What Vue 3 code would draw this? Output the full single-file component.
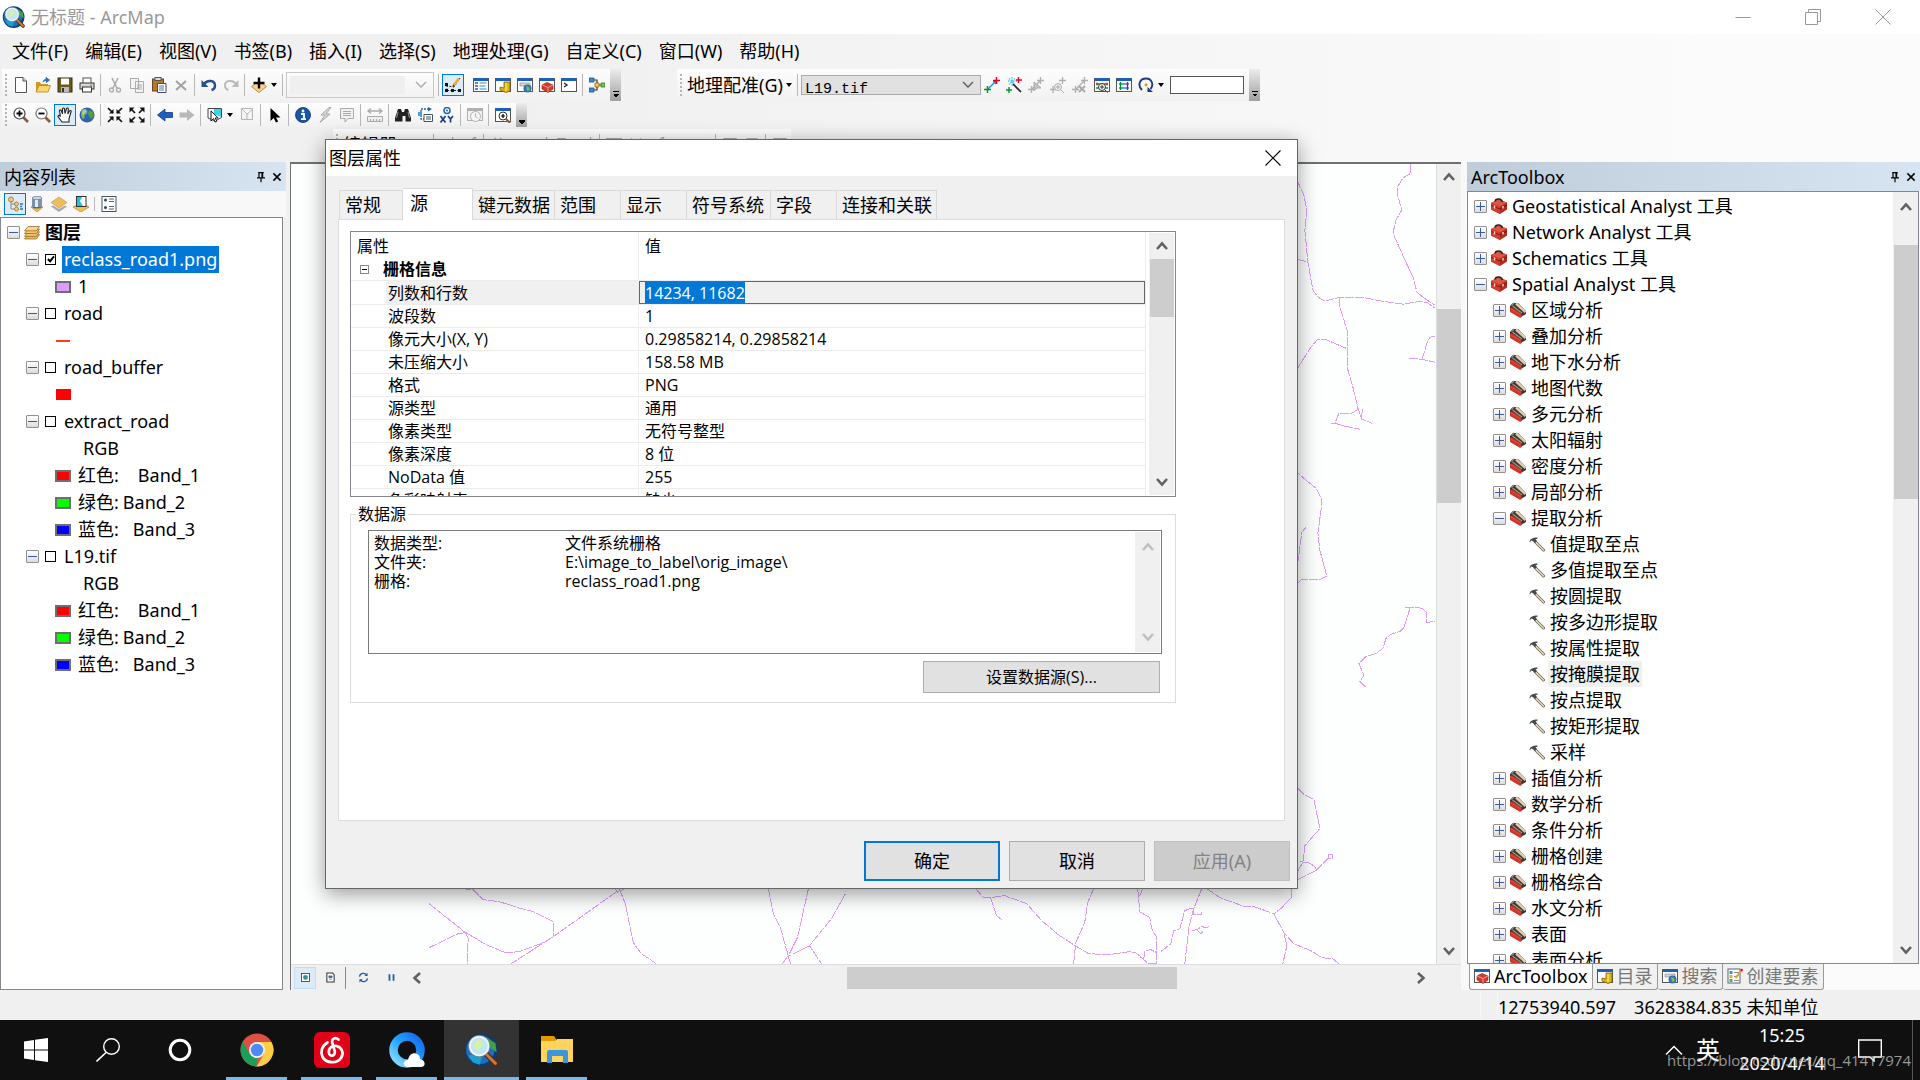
<script setup>
import { onMounted, ref } from 'vue'

const box = (inner) =>
  `<rect x=".5" y="1.5" width="15" height="13" fill="#fff" stroke="#555"/><rect x="1" y="1" width="14" height="3" fill="#1f5fb8"/>${inner}`

const hammer =
  '<path d="M6 5.5L14.500 14" stroke="#6b6250" stroke-width="3" stroke-linecap="round"/><path d="M6 5.500L14.500 14" stroke="#e4dac0" stroke-width="1.600" stroke-linecap="round"/><path d="M.5 5.500C1.500 2.500 4 1.500 8.500 1.500V2.500L6.500 3.500L8 5L6 7L4 5L2 4.500L1 6.500Z" fill="#3f4a50"/>'

const toolbox =
  '<path d="M0 5L7 1.500L16 4.500V11.500L9 16L0 11.500Z" fill="#b5281c"/><path d="M0 5L7 1.500L16 4.500L9 8.500Z" fill="#dd5745"/><path d="M0 5L9 8.500V16L0 11.500Z" fill="#d23c2c"/><path d="M4 3.500C4.500 0 10.500 0 11.500 4" fill="none" stroke="#2a2020" stroke-width="1.500"/><path d="M0 7.500L9 11L16 7" fill="none" stroke="#6e120c" stroke-width=".8"/><path d="M3.500 7.500v3M12 8v2.500" stroke="#f7d9d2" stroke-width="1.400"/>'

const toolset =
  '<path d="M0 4L3 1L8 1L16 9V12L10 15.500L0 9Z" fill="#3c3733"/><path d="M6 1.500L15.500 10" stroke="#ddd0b0" stroke-width="2.400"/><path d="M2.500 4L12 11" stroke="#a09a90" stroke-width="1.100"/><path d="M0 6L2 5.500L11.500 11.500V15.500H9.500L0 10Z" fill="#cf3425"/><path d="M.5 6.700L10.500 12.800" stroke="#e0584a" stroke-width=".8"/><path d="M1.500 3.500L4 1" stroke="#8a8580" stroke-width="1.400"/>'

const globe =
  '<circle cx="8" cy="8" r="7.500" fill="#2f62b0"/><path d="M4 3C7 2 8 3 7.500 5L5 7.500L6 10.500L4 12C2 10 1.500 6 4 3Z" fill="#7fc04a"/><path d="M10 3L14 5L14.500 9L12 12L10 9L9 6Z" fill="#56a038"/><circle cx="5.500" cy="5" r="3" fill="#fff" opacity=".3"/>'

const arcmap =
  '<circle cx="15.500" cy="16" r="14.500" fill="#0c3c78"/><circle cx="14.500" cy="16" r="12.500" fill="#1d6fbf"/><path d="M19 4L28 10L29 18L23 14L18 12Z" fill="#43a047"/><path d="M8 20L16 22L14 29L8 27L4 21Z" fill="#1c9fd0"/><path d="M19 19l9 9" stroke="#5b2c0c" stroke-width="5" stroke-linecap="round"/><path d="M20 20l8 8" stroke="#cf7a35" stroke-width="2.500" stroke-linecap="round"/><circle cx="13.500" cy="12.500" r="8.500" fill="#bfe6f5" stroke="#f4f4f4" stroke-width="2"/><path d="M10 8L15 7L17 12L12 16L9 13Z" fill="#d8f0a0"/><circle cx="13.500" cy="12.500" r="9.600" fill="none" stroke="#64798c" stroke-width=".7"/>'

const ic = {
  hammer, toolbox, toolset, globe, arcmap,
  file: '<path d="M2.500.5h7.500l3.500 3.500v11.500h-11z" fill="#fff" stroke="#555"/><path d="M10 .5v3.500h3.500" fill="#cfe0f2" stroke="#555"/>',
  open: '<path d="M1 15V5h4l1 2h7v8z" fill="#c99a2c"/><path d="M1 15L4 8.500h11.500L13 15z" fill="#fbd66a" stroke="#b5851d" stroke-width=".8"/><path d="M8 5C9 2 11 2 12.500 3M11 .5L14.500 3L11.500 5.500Z" fill="#2a6db8" stroke="#2a6db8"/>',
  save: '<rect x="1" y="1" width="14" height="14" fill="#6b5b1e" stroke="#332d10"/><rect x="4" y="1.500" width="8" height="6" fill="#fff"/><rect x="4" y="10" width="8" height="5" fill="#bbb"/><rect x="5" y="11" width="2" height="4" fill="#333"/>',
  print: '<rect x="4" y="1" width="8" height="6" fill="#fff" stroke="#555"/><rect x="1" y="6" width="14" height="6" fill="#d8d8d8" stroke="#333"/><rect x="3.500" y="10" width="9" height="5" fill="#fff" stroke="#333"/><rect x="11" y="7.500" width="2" height="1.500" fill="#7b2"/>',
  cut: '<path d="M5 1L10 11M11 1L6 11" stroke="#aaa" stroke-width="1.600"/><circle cx="4.500" cy="13" r="2" fill="none" stroke="#aaa" stroke-width="1.300"/><circle cx="11.500" cy="13" r="2" fill="none" stroke="#aaa" stroke-width="1.300"/>',
  copy: '<path d="M1.500 1.500h8v10h-8zM6.500 4.500h8v11h-8z" fill="#f4f4f4" stroke="#aaa"/><path d="M8 8h5M8 10h5M8 12h5" stroke="#aaa"/>',
  paste: '<rect x="1.500" y="2" width="11" height="12" fill="#b77a2c" stroke="#6e4715"/><rect x="4" y=".5" width="6" height="3" fill="#ddd" stroke="#555"/><path d="M6.500 6.500h8.500v9h-8.500z" fill="#fff" stroke="#446"/><path d="M8 9h5M8 11h5M8 13h5" stroke="#57a"/>',
  del: '<path d="M3 4L13 13M13 4L3 13" stroke="#a4a4a4" stroke-width="2.200"/>',
  undo: '<path d="M3 7C6 2.500 14 3 14 8.500C14 11 12.500 12.500 10.500 13" fill="none" stroke="#24508e" stroke-width="2.400"/><path d="M.5 3v7h7z" fill="#24508e"/>',
  redo: '<path d="M13 7C10 2.500 2 3 2 8.500C2 11 3.500 12.500 5.500 13" fill="none" stroke="#bbb" stroke-width="2"/><path d="M15.500 3v7h-7z" fill="#bbb"/>',
  add: '<path d="M8 4L15.500 9.500L8 15.500L.5 9.500Z" fill="#fbd28a" stroke="#b98b3c"/><path d="M8 .5v11M2.500 6h11" stroke="#000" stroke-width="2.400"/>',
  edit: '<path d="M2 13.500h12M2 13.500V9L9 10L15 1" fill="none" stroke="#222" stroke-dasharray="2 1.500"/><path d="M0 12h3v3H0zM6 12h3v3H6zM13 12h3v3h-3zM0 6h3v3H0z" fill="#111"/><path d="M8.500 8.500L14 1.500" stroke="#f0a83c" stroke-width="2.600"/><path d="M7.500 10l.5-2.500l2 1.500z" fill="#333"/>',
  list: box('<path d="M2 6h3M2 9h3M2 12h3" stroke="#1f5fb8" stroke-width="1.500"/><path d="M6.500 6h7M6.500 9h6M6.500 12h7" stroke="#2b8fc0" stroke-width="1.200"/>'),
  catalog: box('<path d="M9 5h6v9l-4 1.500L5 13v-3l4 1z" fill="#e3b512" stroke="#75600c" stroke-width=".8"/><path d="M11 6v8" stroke="#fff1a0"/>'),
  find: box('<rect x="3" y="6" width="10" height="3" fill="#d5d5d5" stroke="#888" stroke-width=".6"/><circle cx="10.500" cy="11.500" r="4" fill="#2f6fb8"/><path d="M9 9l3 1l1 3l-3 1z" fill="#7fc04a"/>'),
  tbx: box('<path d="M3 8l5-2.500L14 8v4l-5 3.500L3 12z" fill="#d33a2b" stroke="#8e1a12" stroke-width=".6"/><path d="M3 8l6 2.500L14 8M9 10.500V15" stroke="#f6b3a8" fill="none" stroke-width=".8"/>'),
  py: box('<path d="M3 6l3 2l-3 2" fill="none" stroke="#222" stroke-width="1.300"/>'),
  model: '<path d="M4 3h4v10H4M8 8h5" fill="none" stroke="#333" stroke-width="1.200"/><path d="M0 1h5v4H0zM0 11h5v4H0z" fill="#3b8ad8" stroke="#1c4f8c" stroke-width=".8"/><path d="M6 6h4v4H6z" fill="#f4c94a" stroke="#8b6a10" stroke-width=".8"/><path d="M12 6h4v4h-4z" fill="#7cc84e" stroke="#2e7a17" stroke-width=".8"/>',
  zin: '<path d="M10 10l5 5" stroke="#8a5a3a" stroke-width="2.600"/><circle cx="6.500" cy="6.500" r="5.500" fill="#fff" stroke="#444" stroke-width="1.200"/><path d="M6.500 3.500v6M3.500 6.500h6" stroke="#000" stroke-width="1.800"/>',
  zout: '<path d="M10 10l5 5" stroke="#8a5a3a" stroke-width="2.600"/><circle cx="6.500" cy="6.500" r="5.500" fill="#fff" stroke="#777" stroke-width="1.200"/><path d="M3.500 6.500h6" stroke="#000" stroke-width="1.800"/>',
  hand: '<path d="M5 15L1 9.500C1 8 2.500 8 3.500 9.500L2.500 4C2.500 2.500 4 2.500 4.500 4L5.500 7L5.500 2C6 .5 7.500 .8 7.500 2L8 6.500L9.500 1.500C10 .5 11.500 1 11.300 2.500L10.800 7L12.500 4C13.300 3 14.500 3.500 14 5L12 11.500V15Z" fill="#fff" stroke="#222" stroke-width="1.100"/>',
  fixin: '<path d="M1 1l5 5M15 1l-5 5M1 15l5-5M15 15l-5-5" stroke="#111" stroke-width="1.700"/><path d="M6.500 2v4.500H2zM9.500 2v4.500H14zM6.500 14V9.500H2zM9.500 14V9.500H14z" fill="#111"/>',
  fixout: '<path d="M2 2l4 4M14 2l-4 4M2 14l4-4M14 14l-4-4" stroke="#111" stroke-width="1.700"/><path d="M.5 5.500V.5h5zM15.500 5.500V.5h-5zM.5 10.500v5h5zM15.500 10.500v5h-5z" fill="#111"/>',
  back: '<path d="M.5 8L8 2v3.500h7.500v5H8V14z" fill="#1f5fc4" stroke="#123a80" stroke-width=".8"/>',
  fwd: '<path d="M15.500 8L8 2v3.500H.5v5H8V14z" fill="#b8b8b8"/>',
  selfeat: '<path d="M1 1.500h13.500v9L8 14L1 11z" fill="#fff" stroke="#444"/><path d="M7 2h7v8L7 7z" fill="#3fd0ea"/><path d="M4 4v10l2.500-2.500L8 15l1.800-.8L8.200 11h3z" fill="#fff" stroke="#111"/>',
  unsel: '<path d="M2.500 1.500h11v11h-11zM3 2l5 5l5-4M8 7v5" fill="#f4f4f4" stroke="#b5b5b5"/>',
  arrow: '<path d="M3.500 1v13l3.200-3L9 15.500l2.200-1L9 10.500h4.500z" fill="#000"/>',
  info: '<circle cx="8" cy="8" r="7.500" fill="#1b55a8" stroke="#0d2f66" stroke-width=".8"/><circle cx="8" cy="4" r="1.400" fill="#fff"/><path d="M6 7h3v5M6 12.200h5" stroke="#fff" stroke-width="1.800" fill="none"/>',
  bolt: '<path d="M12 .5L4 8h4L3 15.500L13 7H9L14 .5z" fill="#d6d6d6" stroke="#aaa"/>',
  note: '<path d="M1.500 1.500h13v10H9l-3 3.500v-3.500H1.500z" fill="#f2f2f2" stroke="#aaa"/><path d="M4 4.500h8M4 6.500h8M4 8.500h8" stroke="#aaa"/>',
  measure: '<path d="M1 4h14M4 1.500L1 4l3 2.500M12 1.500L15 4l-3 2.500" fill="none" stroke="#aaa" stroke-width="1.300"/><path d="M.5 9.500h15v5H.5zM3.500 12v2M6.500 12v2M9.500 12v2M12.500 12v2" fill="#eee" stroke="#aaa"/>',
  bino: '<path d="M3 2h3l1 3h2l1-3h3l3 9v3.500h-5.500V9h-3v5.500H0V11z" fill="#222"/><path d="M3 5L1.500 11M13 5l1.500 6" stroke="#999"/>',
  route: '<path d="M4 5V2h9M4 8v4h4" fill="none" stroke="#2a62a8" stroke-width="1.300" stroke-dasharray="2 1"/><path d="M11 0l4 2l-4 2.500z" fill="#2a62a8"/><rect x="1" y="5" width="4" height="4" fill="#49a0dd"/><path d="M7 7.500h8.500v7H7zM9 10h5M9 12h5" fill="#fff" stroke="#456"/>',
  xy: '<circle cx="8" cy="3.500" r="3" fill="#fff" stroke="#1b66b0" stroke-width="1.500"/><circle cx="8" cy="3.500" r="1" fill="#1b66b0"/><path d="M1.500 9l5 6.500M6.500 9l-5 6.500M9 9l2.500 3v3.500M14 9l-2.500 3" fill="none" stroke="#173f80" stroke-width="1.700"/>',
  clock: '<rect x=".5" y="1.500" width="15" height="12" fill="#f2f2f2" stroke="#b0b0b0"/><path d="M1 3h14" stroke="#b0b0b0" stroke-width="2"/><circle cx="8.500" cy="9.500" r="5" fill="#f6f6f6" stroke="#b0b0b0"/><path d="M8.500 6.500v3l2 1.500" fill="none" stroke="#aaa"/>',
  viewer: box('<path d="M11 12l4 4" stroke="#8a5a3a" stroke-width="2"/><circle cx="8" cy="9" r="4" fill="#fff" stroke="#333"/><path d="M8 7v4M6 9h4" stroke="#000" stroke-width="1.200"/>'),
  cp: '<path d="M4 12L12 4" stroke="#2089e0" stroke-width="1.300"/><path d="M13 3L8.500 4.500L11.500 7.500z" fill="#2089e0"/><path d="M12.500 0v7M9 3.500h7" stroke="#e2001a" stroke-width="1.500"/><path d="M3.500 9v7M0 12.500h7" stroke="#00952a" stroke-width="1.500"/>',
  cpauto: '<path d="M2 4h9M3 1.500l6 6M9 1.500l-6 6M6 0v9" stroke="#4cc4ee" stroke-width="1.300" stroke-dasharray="1.500 1"/><path d="M7 7l8 8" stroke="#222" stroke-width="1.700"/><path d="M12.500 0v6M10 3h6" stroke="#e2001a" stroke-width="1.400"/><path d="M3 10v6M0 13h6" stroke="#00952a" stroke-width="1.400"/>',
  cpg: '<path d="M4 12L12 4M12.500 0v7M9 3.500h7M3.500 9v7M0 12.500h7" stroke="#b0b0b0" stroke-width="1.300"/><path d="M6 5v9l3-3h4z" fill="#c4c4c4" stroke="#aaa"/>',
  cpz: '<path d="M12.500 0v7M9 3.500h7M3 9v7M0 12.500h6" stroke="#b0b0b0" stroke-width="1.300"/><circle cx="8" cy="10" r="3.500" fill="#eee" stroke="#b0b0b0"/><path d="M8 8v4M6 10h4M11 13l3 3" stroke="#aaa"/>',
  cpx: '<path d="M4 12L12 4M12.500 0v7M9 3.500h7M3.500 9v7M0 12.500h7" stroke="#b0b0b0" stroke-width="1.300"/><path d="M7 9l6 6M13 9l-6 6" stroke="#aaa" stroke-width="2"/>',
  gview: box('<path d="M2 7h12M2 11h12" stroke="#00a03a" stroke-width="1.300"/><circle cx="8" cy="10" r="3.500" fill="#fff" stroke="#333"/><path d="M8 8v4M6 10h4M10.500 12.500l3 3" stroke="#333"/><path d="M3 5.500v3M13 5.500v3" stroke="#e2001a"/>'),
  gtab: box('<path d="M3 7h10M3 11h10" stroke="#2089e0" stroke-width="1.300"/><path d="M4.500 5v4M4.500 9v4" stroke="#00952a" stroke-width="1.300"/><path d="M11.500 5v4M11.500 9v4" stroke="#e2001a" stroke-width="1.300"/>'),
  rotate: '<path d="M4 13C-1 8 2 1.500 8 1.500S16 8 12.500 12" fill="none" stroke="#203a80" stroke-width="1.900"/><path d="M9.500 10v5h5.500z" fill="#203a80"/><circle cx="8" cy="8" r="1.400" fill="#c0a000"/>',
  tocOrder: '<path d="M4 5v8h5M4 8h5" fill="none" stroke="#888"/><circle cx="4" cy="3.500" r="2.500" fill="#f3c878" stroke="#ae8238"/><circle cx="9.500" cy="8" r="2" fill="#f3c878" stroke="#ae8238"/><circle cx="9.500" cy="13" r="2" fill="#f3c878" stroke="#ae8238"/><path d="M13 8h3M13 13h3M13 10.500h2" stroke="#1b78c8" stroke-width="1.500"/>',
  tocSource: '<path d="M2 11l6-2l6 2l-6 5z" fill="#f3c24d" stroke="#ae8238" stroke-width=".7"/><rect x="3" y="1.500" width="10" height="9.500" fill="#7d93ad"/><rect x="6" y="2" width="3" height="9" fill="#e4edf6"/><ellipse cx="8" cy="2" rx="5" ry="1.700" fill="#c7d3e0" stroke="#5d6f85" stroke-width=".6"/><path d="M3 11c2 2 8 2 10 0" fill="#56687e"/>',
  tocVis: '<path d="M0 10.500L8 16l8-5.500L8 6z" fill="#aaa"/><path d="M0 8L8 13l8-5L8 3z" fill="#fff"/><path d="M0 6.500L8 1l8 5.500L8 12z" fill="#f0bd5c" stroke="#c08b2c" stroke-width=".6"/>',
  tocSel: '<path d="M0 11L8 7l8 4l-8 5z" fill="#f3c24d" stroke="#ae8238" stroke-width=".7"/><rect x="3.500" y=".5" width="9.500" height="10" fill="#fff" stroke="#333"/><path d="M4 1h5l-2 4l3 5H4z" fill="#20c4e0"/>',
  tocOpt: '<rect x="1" y=".5" width="14" height="15" fill="#fff" stroke="#456"/><circle cx="4.500" cy="4" r="1.500" fill="#345"/><circle cx="4.500" cy="11.500" r="1.500" fill="#345"/><path d="M8 3h5M8 5.500h5M8 10.500h5M8 13h5" stroke="#567"/>',
  layers: '<path d="M4 9.500h11.500l-3 4.500H.5z" fill="#e9b85d" stroke="#8f6218" stroke-width=".7"/><path d="M4 6.800h11.500l-3 4.500H.5z" fill="#f0c674" stroke="#8f6218" stroke-width=".7"/><path d="M4 4h11.500l-3 4.500H.5z" fill="#f0c674" stroke="#8f6218" stroke-width=".7"/><path d="M4 1.500h11.500l-3 4.300H.5z" fill="#f6d592" stroke="#8f6218" stroke-width=".7"/>',
  create: '<rect x="1" y="1" width="12" height="14" fill="#fff" stroke="#567"/><rect x="2.500" y="3" width="3" height="3" fill="#3b8ad8"/><rect x="2.500" y="7" width="3" height="3" fill="#e3b512"/><rect x="2.500" y="11" width="3" height="3" fill="#4cae4c"/><path d="M7 4.500h5M7 8.500h3M7 12.500h5" stroke="#888"/><path d="M8.500 10L15 2" stroke="#e9a33c" stroke-width="2.200"/><path d="M14 3l1.500-2" stroke="#d06" stroke-width="2"/>',
  pin: '<path d="M4 2h7M5 2v6M9.500 2v6M2.500 8.500h10M7.500 9v5" stroke="#000" stroke-width="1.500" fill="none"/><path d="M9 2v6" stroke="#000" stroke-width="2"/>',
  x: '<path d="M3 3l9 9M12 3l-9 9" stroke="#000" stroke-width="1.900"/>',
  dataView: '<rect x="3" y="3" width="10" height="10" fill="#fff" stroke="#333"/><circle cx="8" cy="8" r="3" fill="#4aa24a"/><path d="M6 6h3v3H6z" fill="#2f7fd0"/>',
  layoutView: '<path d="M3.500 2.500h7l2 2v9h-9z" fill="#fff" stroke="#333" stroke-width="1.300"/><path d="M6 6h4v2H6zM6 10h4" fill="#3b8ad8" stroke="#333" stroke-width=".7"/>',
  refresh: '<path d="M3 7a5 5 0 0 1 9-2M13 9a5 5 0 0 1-9 2" fill="none" stroke="#1c5fa8" stroke-width="1.700"/><path d="M13 2v4H9zM3 14v-4h4z" fill="#1c5fa8"/>',
  pause: '<path d="M5.500 4v8M10.500 4v8" stroke="#1c5fa8" stroke-width="2.200"/>',
}

const bar1 = [
  'file', 'open', 'save', 'print', '|', 'cut', 'copy', 'paste', 'del', '|', 'undo', 'redo', '|', 'add', 'v', '|',
]
const bar1b = ['list', 'catalog', 'find', 'tbx', 'py', '|', 'model']
const bar2 = [
  'zin', 'zout', '*hand', 'globe', '|', 'fixin', 'fixout', '|', 'back', 'fwd', '|', 'selfeat', 'v', 'unsel', '|',
  'arrow', '|', 'info', 'bolt', 'note', '|', 'measure', '|', 'bino', 'route', 'xy', '|', 'clock', '|', 'viewer',
]
const barGeo = ['cp', 'cpauto', 'cpg', 'cpz', 'cpx', 'gview', 'gtab', 'rotate', 'v']
const barEdit = ['cpg', 'bolt', '|', 'cut', 'del', 'cpz', 'copy', 'cpx', '|', 'clock', 'measure', 'bolt', 'del', 'redo', '|', 'note', 'unsel', '|', 'note']

const menus = ['文件(F)', '编辑(E)', '视图(V)', '书签(B)', '插入(I)', '选择(S)', '地理处理(G)', '自定义(C)', '窗口(W)', '帮助(H)']

const bands = [
  { sw: '#ff0000', text: '红色:', band: 'Band_1', gap: 'g3' },
  { sw: '#00ff00', text: '绿色:', band: 'Band_2', gap: 'g1' },
  { sw: '#0000ff', text: '蓝色:', band: 'Band_3', gap: 'g2' },
]
const toc = [
  { layer: 'reclass_road1.png', checked: true, selected: true },
  { sw: '#dc9cff', text: '1' },
  { layer: 'road' },
  { line: true },
  { layer: 'road_buffer' },
  { fill: true },
  { layer: 'extract_road' },
  { rgb: 'RGB' },
  ...bands,
  { layer: 'L19.tif' },
  { rgb: 'RGB' },
  ...bands,
]

const tree = [
  [0, '+', 'Geostatistical Analyst 工具'], [0, '+', 'Network Analyst 工具'], [0, '+', 'Schematics 工具'], [0, '-', 'Spatial Analyst 工具'],
  [1, '+', '区域分析'], [1, '+', '叠加分析'], [1, '+', '地下水分析'], [1, '+', '地图代数'], [1, '+', '多元分析'],
  [1, '+', '太阳辐射'], [1, '+', '密度分析'], [1, '+', '局部分析'], [1, '-', '提取分析'],
  [2, '', '值提取至点'], [2, '', '多值提取至点'], [2, '', '按圆提取'], [2, '', '按多边形提取'], [2, '', '按属性提取'],
  [2, '', '按掩膜提取', true], [2, '', '按点提取'], [2, '', '按矩形提取'], [2, '', '采样'],
  [1, '+', '插值分析'], [1, '+', '数学分析'], [1, '+', '条件分析'], [1, '+', '栅格创建'], [1, '+', '栅格综合'],
  [1, '+', '水文分析'], [1, '+', '表面'], [1, '+', '表面分析'],
]
const treeIcon = ['toolbox', 'toolset', 'hammer']

const dockTabs = [
  ['tbx', 'ArcToolbox'], ['catalog', '目录'], ['find', '搜索'], ['create', '创建要素'],
]

const tabs = [
  ['常规', 64], ['源', 70], ['键元数据', 82], ['范围', 66], ['显示', 66], ['符号系统', 84], ['字段', 66], ['连接和关联', 100],
]

const props = [
  ['波段数', '1'], ['像元大小(X, Y)', '0.29858214, 0.29858214'], ['未压缩大小', '158.58 MB'], ['格式', 'PNG'],
  ['源类型', '通用'], ['像素类型', '无符号整型'], ['像素深度', '8 位'], ['NoData 值', '255'], ['色彩映射表', '缺少'],
]

const roads = [
  'M1410 164L1411 173L1403 178L1397 188L1398 197L1402 210L1396 220L1393 233L1405 260L1413 277L1417 292L1424 298L1435 305',
  'M1297 180L1304 195L1307 210L1305 230L1308 262L1313 290L1318 297L1325 301L1340 297L1361 297L1382 301L1403 304L1421 301L1428 303L1435 308',
  'M1297 259L1308 262',
  'M1340 298L1340 307L1348 333L1348 370L1353 387L1358 408L1362 419L1372 423',
  'M1297 369L1311 347L1318 339L1325 339L1346 348',
  'M1358 409L1352 413L1339 413L1335 423L1331 423M1335 423L1345 426L1360 429M1363 409L1361 417',
  'M1409 358L1421 359L1435 362M1422 359L1427 343L1430 337L1435 336',
  'M1297 457L1298 473L1316 488L1321 497L1322 503L1318 533L1320 550L1327 576L1320 579L1302 579L1298 582',
  'M1306 527L1302 532L1298 562',
  'M1405 607L1418 607L1424 609L1427 613L1427 622L1435 621M1410 608L1404 627L1400 631L1391 634L1386 638L1383 648L1376 653L1366 656L1359 663L1364 675L1360 681L1366 687',
  'M1298 788L1304 794L1314 799L1320 828L1305 845L1303 862L1298 870',
  'M1298 879L1316 870L1329 857M1329 854h4v4h-4zM1300 861L1309 862L1315 866L1316 870',
  'M976 888L984 897L991 897L1005 895L1027 903L1042 920L1060 935L1074 944L1089 953L1109 954L1129 951L1136 952L1144 959L1149 963L1157 963',
  'M991 897L997 915L1002 919',
  'M1094 888L1088 902L1085 922L1076 942L1074 963',
  'M1138 888L1140 911L1150 917L1152 928L1157 937L1157 963M1143 888L1140 895',
  'M1144 959L1145 950L1151 949L1157 952',
  'M1161 951L1171 943L1174 930L1180 928L1185 910L1193 907L1194 914L1202 914V911',
  'M1202 888L1194 908L1189 927L1185 963',
  'M1192 930L1197 929L1202 926L1207 927L1210 925M1197 929L1201 933L1204 930',
  'M1207 888L1220 897L1245 906L1254 906L1274 913L1284 932L1294 943L1311 950L1322 957L1333 958L1339 963',
  'M1292 888L1292 896L1282 907L1274 913M1284 932L1287 945L1283 963',
  'M463 888L474 889L484 899L500 901L522 908L534 911L554 921L554 935',
  'M430 903L465 931L487 944L506 952L520 951L544 942',
  'M430 947L459 933L466 932L469 938L468 963',
  'M626 888L616 892L554 936L512 963M616 888L618 892M620 888L626 903L634 942L642 953L657 963',
  'M769 888L774 913L781 927L791 963M809 888L798 937L790 953L783 963',
  'M846 893L832 918L810 945L822 963M810 945L790 955',
]

const sizeField = ref(null)
onMounted(() => {
  sizeField.value.focus({ preventScroll: true })
  sizeField.value.select()
})
</script>

<template>
  <div class="desktop">
    <header class="titlebar">
      <svg class="app-icon" viewBox="0 0 32 32" v-html="ic.arcmap" />
      <h1>无标题 - ArcMap</h1>
      <div class="win-buttons">
        <button aria-label="最小化"><svg viewBox="0 0 16 16"><path d="M.5 8.500h15" stroke="#999" /></svg></button>
        <button aria-label="还原"><svg viewBox="0 0 16 16"><path d="M.5 3.500h12v12H.5zM3.500 3.500V.5h12v12h-3" fill="none" stroke="#999" /></svg></button>
        <button aria-label="关闭"><svg viewBox="0 0 16 16"><path d="M.5.5l15 15M15.500.5l-15 15" stroke="#999" /></svg></button>
      </div>
    </header>

    <nav class="menubar">
      <button v-for="m in menus" :key="m">{{ m }}</button>
    </nav>

    <div class="bars bars-top">
      <div class="toolbar tall">
        <i class="grip" />
        <template v-for="(t, i) in bar1" :key="i">
          <i v-if="t === '|'" class="sep" />
          <i v-else-if="t === 'v'" class="drop" />
          <button v-else class="tool" :aria-label="t"><svg viewBox="0 0 16 16" v-html="ic[t]" /></button>
        </template>
        <span class="combo scale">
          <select aria-label="比例尺" disabled><option></option></select>
          <svg viewBox="0 0 12 8"><path d="M1 1l5 5l5-5" fill="none" stroke="#aaa" stroke-width="1.300" /></svg>
        </span>
        <i class="sep" />
        <button class="tool on" aria-label="编辑器工具条"><svg viewBox="0 0 16 16" v-html="ic.edit" /></button>
        <span class="space" />
        <template v-for="(t, i) in bar1b" :key="i">
          <i v-if="t === '|'" class="sep" />
          <button v-else class="tool" :aria-label="t"><svg viewBox="0 0 16 16" v-html="ic[t]" /></button>
        </template>
        <i class="tail" />
      </div>
      <div class="toolbar tall geo">
        <i class="grip" />
        <button class="text-tool">地理配准(G)</button>
        <i class="drop" />
        <i class="sep" />
        <span class="combo raster">
          <select aria-label="栅格"><option>L19.tif</option></select>
          <svg viewBox="0 0 12 8"><path d="M1 1l5 5l5-5" fill="none" stroke="#555" stroke-width="1.300" /></svg>
        </span>
        <template v-for="(t, i) in barGeo" :key="i">
          <i v-if="t === 'v'" class="drop" />
          <button v-else class="tool" :aria-label="t"><svg viewBox="0 0 16 16" v-html="ic[t]" /></button>
        </template>
        <input class="angle" type="text" aria-label="旋转角度" />
        <i class="tail" />
      </div>
    </div>
    <div class="bars">
      <div class="toolbar short">
        <i class="grip" />
        <template v-for="(t, i) in bar2" :key="i">
          <i v-if="t === '|'" class="sep" />
          <i v-else-if="t === 'v'" class="drop" />
          <button v-else class="tool" :class="{ on: t[0] === '*' }" :aria-label="t"><svg viewBox="0 0 16 16" v-html="ic[t.replace('*', '')]" /></button>
        </template>
        <i class="tail" />
      </div>
    </div>
    <div class="bars bars-edit">
      <div class="toolbar tall">
        <i class="grip" />
        <button class="text-tool">编辑器(R)</button>
        <i class="drop" />
        <i class="sep" />
        <template v-for="(t, i) in barEdit" :key="i">
          <i v-if="t === '|'" class="sep" />
          <button v-else class="tool" :aria-label="t"><svg viewBox="0 0 16 16" v-html="ic[t]" /></button>
        </template>
      </div>
    </div>

    <main class="work">
      <section class="panel toc">
        <header class="panel-title">
          <h2>内容列表</h2>
          <button aria-label="固定"><svg viewBox="0 0 15 15" v-html="ic.pin" /></button>
          <button aria-label="关闭"><svg viewBox="0 0 15 15" v-html="ic.x" /></button>
        </header>
        <div class="toc-tools">
          <button class="on" aria-label="按绘制顺序列出"><svg viewBox="0 0 16 16" v-html="ic.tocOrder" /></button>
          <button aria-label="按源列出"><svg viewBox="0 0 16 16" v-html="ic.tocSource" /></button>
          <button aria-label="按可见性列出"><svg viewBox="0 0 16 16" v-html="ic.tocVis" /></button>
          <button aria-label="按选择列出"><svg viewBox="0 0 16 16" v-html="ic.tocSel" /></button>
          <i class="sep" />
          <button aria-label="选项"><svg viewBox="0 0 16 16" v-html="ic.tocOpt" /></button>
        </div>
        <ul class="toc-list">
          <li class="root">
            <button class="expand minus" aria-label="折叠" />
            <svg viewBox="0 0 16 16" v-html="ic.layers" />
            <b>图层</b>
          </li>
          <li v-for="(r, i) in toc" :key="i" :class="{ layer: r.layer, legend: !r.layer }">
            <template v-if="r.layer">
              <button class="expand minus" aria-label="折叠" />
              <label><input type="checkbox" :checked="r.checked" /><span class="name" :class="{ selected: r.selected }">{{ r.layer }}</span></label>
            </template>
            <span v-else-if="r.rgb" class="rgb">{{ r.rgb }}</span>
            <i v-else-if="r.line" class="line-symbol" />
            <i v-else-if="r.fill" class="fill-symbol" />
            <template v-else>
              <i class="swatch" :style="{ background: r.sw }" />
              <span>{{ r.text }}</span>
              <span v-if="r.band" :class="r.gap">{{ r.band }}</span>
            </template>
          </li>
        </ul>
      </section>

      <section class="map">
        <svg class="roads" viewBox="292 164 1144 800" preserveAspectRatio="xMinYMin slice" aria-label="道路">
          <path v-for="(d, i) in roads" :key="i" :d="d" />
        </svg>
        <div class="scroll v map-v">
          <button aria-label="向上"><svg viewBox="0 0 12 10"><path d="M1 8l5-5.500L11 8" /></svg></button>
          <i class="thumb" />
          <button aria-label="向下"><svg viewBox="0 0 12 10"><path d="M1 2l5 5.500L11 2" /></svg></button>
        </div>
        <div class="map-foot">
          <button class="view on" aria-label="数据视图"><svg viewBox="0 0 16 16" v-html="ic.dataView" /></button>
          <button class="view" aria-label="布局视图"><svg viewBox="0 0 16 16" v-html="ic.layoutView" /></button>
          <i class="sep" />
          <button class="view" aria-label="刷新"><svg viewBox="0 0 16 16" v-html="ic.refresh" /></button>
          <button class="view" aria-label="暂停"><svg viewBox="0 0 16 16" v-html="ic.pause" /></button>
          <div class="scroll h">
            <button aria-label="向左"><svg viewBox="0 0 10 12"><path d="M8 1L2.500 6L8 11" /></svg></button>
            <i class="thumb" />
            <button aria-label="向右"><svg viewBox="0 0 10 12"><path d="M2 1l5.500 5L2 11" /></svg></button>
          </div>
        </div>
      </section>

      <section class="panel dock">
        <header class="panel-title">
          <h2>ArcToolbox</h2>
          <button aria-label="固定"><svg viewBox="0 0 15 15" v-html="ic.pin" /></button>
          <button aria-label="关闭"><svg viewBox="0 0 15 15" v-html="ic.x" /></button>
        </header>
        <div class="tree-box">
          <ul class="tree">
            <li v-for="([lvl, sign, text, sel], i) in tree" :key="i" :class="'l' + lvl">
              <button v-if="sign" class="expand" :class="sign === '+' ? 'plus' : 'minus'" aria-label="展开" />
              <svg viewBox="0 0 16 16" v-html="ic[treeIcon[lvl]]" />
              <span :class="{ picked: sel }">{{ text }}</span>
            </li>
          </ul>
          <div class="scroll v tree-v">
            <button aria-label="向上"><svg viewBox="0 0 12 10"><path d="M1 8l5-5.500L11 8" /></svg></button>
            <i class="thumb" />
            <button aria-label="向下"><svg viewBox="0 0 12 10"><path d="M1 2l5 5.500L11 2" /></svg></button>
          </div>
        </div>
        <div class="dock-tabs">
          <button v-for="([icon, text], i) in dockTabs" :key="text" :class="{ active: i === 0 }">
            <svg viewBox="0 0 16 16" v-html="ic[icon]" />{{ text }}
          </button>
        </div>
      </section>
    </main>

    <footer class="status">
      <i /><i />
      <p><span>12753940.597</span><span>3628384.835 未知单位</span></p>
    </footer>

    <div class="taskbar">
      <button class="sys" aria-label="开始"><svg width="24" height="24" viewBox="0 0 24 24"><path d="M0 3.500L10 2v9.500H0zM11 1.800L24 0v11.500H11zM0 12.500h10V22L0 20.500zM11 12.500h13V24l-13-1.800z" fill="#fff" /></svg></button>
      <button class="sys" aria-label="搜索"><svg width="24" height="24" viewBox="0 0 24 24"><circle cx="15.500" cy="8.500" r="7.800" fill="none" stroke="#fff" stroke-width="1.400" /><path d="M10 14.500L.5 23.500" stroke="#fff" stroke-width="1.600" /></svg></button>
      <button class="sys" aria-label="Cortana"><svg width="24" height="24" viewBox="0 0 24 24"><circle cx="12" cy="12" r="9.800" fill="none" stroke="#fff" stroke-width="3" /></svg></button>
      <button class="app first" aria-label="Chrome">
        <svg width="34" height="34" viewBox="0 0 34 34"><circle cx="17" cy="17" r="16.500" fill="#dd5044" /><path d="M2.700 8.800L9.800 21L17 25.300L16.500 33.500A16.500 16.500 0 0 1 2.700 8.800Z" fill="#1a9f58" /><path d="M17 9h14.400A16.500 16.500 0 0 1 16.500 33.500L24 21Z" fill="#ffce44" /><circle cx="17" cy="17" r="8" fill="#f1f1f1" /><circle cx="17" cy="17" r="6.200" fill="#4c8bf5" /></svg>
      </button>
      <button class="app" aria-label="网易云音乐">
        <svg width="36" height="36" viewBox="0 0 36 36"><rect width="36" height="36" rx="6" fill="#e00018" /><path d="M24.500 7.500C21 4.500 17.500 7 18.200 10.500L20.800 19.500C21.500 24.500 15.200 25 14.800 20.500C14.500 16 18 13.200 22.500 14C28.500 15.500 30 21.500 27 26C23 32 12 31.500 8.500 25C6 19.500 8 13.500 13.500 10.500" fill="none" stroke="#fff" stroke-width="2.700" stroke-linecap="round" /></svg>
      </button>
      <button class="app" aria-label="QQ浏览器">
        <svg width="36" height="36" viewBox="0 0 36 36"><defs><linearGradient id="qb" x1="0" y1="1" x2="1" y2="0"><stop offset="0" stop-color="#8be0ff" /><stop offset=".5" stop-color="#22a4ff" /><stop offset="1" stop-color="#1668e8" /></linearGradient></defs><circle cx="18" cy="18" r="13.500" fill="none" stroke="url(#qb)" stroke-width="8.500" /><path d="M18 35C13 34 14 28 19 28C20 23 24 20 28 22C31 23 31 26 31 27C37 28 37 35 32 35Z" fill="#fff" /></svg>
      </button>
      <button class="app active" aria-label="ArcMap"><svg width="36" height="36" viewBox="0 0 32 32" v-html="ic.arcmap" /></button>
      <button class="app" aria-label="文件资源管理器">
        <svg width="34" height="28" viewBox="0 0 34 28"><path d="M1 0h13l2 3v3H1z" fill="#e29a00" /><path d="M1 5h14l2-2h16v23H1z" fill="#ffd45e" /><path d="M7 27V16q0-2 2-2h17q2 0 2 2v11h-5v-7H12v7z" fill="#3a96dd" /></svg>
      </button>
      <div class="tray">
        <svg width="18" height="12" viewBox="0 0 18 12"><path d="M1 10.500l8-8l8 8" fill="none" stroke="#fff" stroke-width="1.500" /></svg>
        <span class="ime">英</span>
        <time><span>15:25</span><span>2020/4/14</span></time>
        <svg class="notice" width="24" height="24" viewBox="0 0 24 24"><path d="M.7 2h22.600v17H16v4l-4-4H.7z" fill="none" stroke="#fff" stroke-width="1.400" /></svg>
        <i class="peek" />
      </div>
      <span class="watermark">https://blog.csdn.net/qq_41417974</span>
    </div>

    <section class="dialog" role="dialog" aria-labelledby="dialog-title">
      <header>
        <h2 id="dialog-title">图层属性</h2>
        <button aria-label="关闭"><svg viewBox="0 0 16 16"><path d="M.5.5l15 15M15.500.5l-15 15" stroke="#000" stroke-width="1.100" /></svg></button>
      </header>
      <div class="tabs" role="tablist">
        <button v-for="([text, w], i) in tabs" :key="text" role="tab" :class="{ active: i === 1 }" :style="{ width: w + 'px' }">{{ text }}</button>
      </div>
      <div class="page">
        <div class="grid-box">
          <table>
            <thead>
              <tr><th>属性</th><th>值</th></tr>
            </thead>
            <tbody>
              <tr class="group"><td><i class="mini" /><b>栅格信息</b></td><td></td></tr>
              <tr class="current">
                <td><label for="size-field">列数和行数</label></td>
                <td><input id="size-field" ref="sizeField" type="text" value="14234, 11682" readonly /></td>
              </tr>
              <tr v-for="[k, v] in props" :key="k"><td>{{ k }}</td><td>{{ v }}</td></tr>
            </tbody>
          </table>
          <div class="scroll v grid-v">
            <button aria-label="向上"><svg viewBox="0 0 12 10"><path d="M1 8l5-5.500L11 8" /></svg></button>
            <i class="thumb" />
            <button aria-label="向下"><svg viewBox="0 0 12 10"><path d="M1 2l5 5.500L11 2" /></svg></button>
          </div>
        </div>
        <fieldset>
          <legend>数据源</legend>
          <div class="source">
            <dl>
              <dt>数据类型:</dt><dd>文件系统栅格</dd>
              <dt>文件夹:</dt><dd>E:\image_to_label\orig_image\</dd>
              <dt>栅格:</dt><dd>reclass_road1.png</dd>
            </dl>
            <div class="scroll v off">
              <button aria-label="向上" disabled><svg viewBox="0 0 12 10"><path d="M1 8l5-5.500L11 8" /></svg></button>
              <button aria-label="向下" disabled><svg viewBox="0 0 12 10"><path d="M1 2l5 5.500L11 2" /></svg></button>
            </div>
          </div>
          <button class="push set">设置数据源(S)...</button>
        </fieldset>
      </div>
      <footer>
        <button class="push default">确定</button>
        <button class="push">取消</button>
        <button class="push" disabled>应用(A)</button>
      </footer>
    </section>
  </div>
</template>

<style>
body {
  margin: 0;
  overflow: hidden;
}
</style>

<style scoped>
.desktop {
  position: relative;
  display: flex;
  flex-direction: column;
  height: 100vh;
  overflow: hidden;
  background: linear-gradient(90deg, #f0f0f0 25%, #fbfbfb 90%);
  color: #000;
  font: 18px/26px 'Noto Sans', 'Noto Sans CJK SC', sans-serif;
}
button,
input,
select {
  margin: 0;
  padding: 0;
  border: 0;
  border-radius: 0;
  background: none;
  color: inherit;
  font: inherit;
}
h1,
h2,
ul,
dl,
dd,
p {
  margin: 0;
  padding: 0;
  font-size: inherit;
  font-weight: 400;
  list-style: none;
}
svg {
  display: block;
  flex: none;
}
i {
  flex: none;
}

.titlebar {
  display: flex;
  align-items: center;
  height: 34px;
  padding: 0 2px;
  background: #fff;
  color: #999;
}
.app-icon {
  width: 24px;
  height: 24px;
  margin-right: 5px;
}
.titlebar h1 {
  flex: 1;
}
.win-buttons {
  display: flex;
}
.win-buttons button {
  display: flex;
  justify-content: center;
  width: 70px;
}
.win-buttons svg {
  width: 16px;
  height: 16px;
}

.menubar {
  display: flex;
  gap: 1px;
  box-sizing: border-box;
  height: 35px;
  padding: 0 0 2px 4px;
}
.menubar button {
  padding: 0 8px;
  white-space: nowrap;
}

.bars {
  display: flex;
  height: 26px;
  padding-left: 2px;
}
.bars-top {
  height: 34px;
}
.bars-edit {
  height: 33px;
  padding-left: 333px;
}
.toolbar {
  display: flex;
  align-items: center;
  box-sizing: border-box;
  background: linear-gradient(#fdfdfd, #f1f1f1);
}
.toolbar.tall {
  height: 32px;
}
.toolbar.short {
  height: 24px;
}
.geo {
  margin-left: 56px;
}
.grip {
  width: 2px;
  height: 22px;
  margin: 0 3px;
  background: repeating-linear-gradient(#b4b4b4 0 2px, transparent 2px 4px);
}
.tool {
  box-sizing: border-box;
  display: flex;
  align-items: center;
  justify-content: center;
  width: 22px;
  height: 22px;
}
.tool svg {
  width: 16px;
  height: 16px;
}
.on {
  border: 1px solid #0078d7;
  background: #dcebf8;
}
.sep {
  width: 1px;
  height: 22px;
  margin: 0 3px 0 2px;
  background: #b8b8b8;
}
.drop {
  margin: 0 3px 0 1px;
  border: 3px solid transparent;
  border-top: 4px solid #000;
  border-bottom: 0;
}
.space {
  width: 6px;
}
.tail {
  align-self: stretch;
  width: 11px;
  margin-left: 2px;
  background:
    linear-gradient(#000, #000) 3px 72% / 6px 1px no-repeat,
    conic-gradient(from -45deg at 50% 100%, #000 90deg, transparent 0) 3px 86% / 6px 3px no-repeat,
    linear-gradient(#ececec, #a0a0a0);
}
.combo {
  position: relative;
  display: block;
}
.combo select {
  box-sizing: border-box;
  display: block;
  width: 100%;
  height: 100%;
  appearance: none;
}
.combo svg {
  position: absolute;
  right: 7px;
  top: 50%;
  width: 12px;
  height: 8px;
  margin-top: -4px;
  pointer-events: none;
}
.scale {
  width: 148px;
  height: 26px;
  margin-right: 2px;
}
.scale select {
  padding: 3px 28px 3px 3px;
  border: 1px solid #c8c8c8;
  background: linear-gradient(#efefef, #efefef) content-box no-repeat #fff;
  opacity: 1;
}
.raster {
  width: 180px;
  height: 20px;
}
.raster select {
  padding: 6px 0 0 3px;
  border: 1px solid #aaa;
  background: #e1e1e1;
  font: 15px/15px 'Liberation Mono', monospace;
}
.text-tool {
  padding: 0 2px;
  white-space: nowrap;
}
.angle {
  box-sizing: border-box;
  width: 74px;
  height: 18px;
  margin: 0 3px;
  border: 1px solid #555;
  background: #fff;
}

.work {
  display: flex;
  flex: 1;
  min-height: 0;
}
.panel {
  display: flex;
  flex-direction: column;
  flex: none;
  min-height: 0;
}
.toc {
  width: 286px;
}
.dock {
  width: 453px;
  margin-left: 6px;
}
.panel-title {
  display: flex;
  align-items: center;
  height: 29px;
  padding: 0 1px 0 4px;
  background: linear-gradient(90deg, #bfcddb, #d7e4f2);
}
.panel-title h2 {
  flex: 1;
}
.panel-title button {
  width: 16px;
}
.panel-title svg {
  width: 12px;
  height: 12px;
  margin: auto;
}
.toc-tools {
  display: flex;
  align-items: center;
  height: 26px;
  padding-left: 4px;
  background: #f8f8f8;
}
.toc-tools button {
  box-sizing: border-box;
  display: flex;
  align-items: center;
  justify-content: center;
  width: 22px;
  height: 22px;
}
.toc-tools svg {
  width: 16px;
  height: 16px;
}
.toc-tools .sep {
  height: 14px;
}
.toc-list {
  flex: 1;
  box-sizing: border-box;
  width: 283px;
  padding-top: 1px;
  border: 1px solid #828790;
  background: #fff;
  line-height: 27px;
  overflow: hidden;
}
.toc-list li {
  display: flex;
  align-items: center;
  height: 27px;
  white-space: nowrap;
}
.root {
  padding-left: 6px;
}
.root svg {
  width: 16px;
  height: 16px;
  margin: 0 5px 0 4px;
}
.layer {
  padding-left: 25px;
}
.layer label {
  display: flex;
  align-items: center;
}
.layer input {
  appearance: none;
  width: 11px;
  height: 11px;
  margin: 0 6px;
  border: 1px solid #000;
  box-sizing: border-box;
  position: relative;
}
.layer input:checked::after {
  content: '';
  position: absolute;
  left: 3px;
  top: 0;
  width: 2px;
  height: 5px;
  border: solid #000;
  border-width: 0 2px 2px 0;
  transform: rotate(40deg);
}
.name {
  padding: 0 2px;
}
.name.selected {
  background: #0078d7;
  color: #fff;
}
.legend {
  padding-left: 54px;
}
.swatch {
  box-sizing: border-box;
  width: 16px;
  height: 12px;
  margin-right: 7px;
  border: 2px solid #6e6e6e;
}
.line-symbol {
  width: 14px;
  height: 2px;
  margin-left: 1px;
  background: #ff3a14;
}
.fill-symbol {
  width: 15px;
  height: 11px;
  margin-left: 1px;
  background: #f00;
}
.rgb {
  margin-left: 28px;
}
.g1 {
  margin-left: 4px;
}
.g2 {
  margin-left: 14px;
}
.g3 {
  margin-left: 19px;
}
.expand {
  flex: none;
  box-sizing: border-box;
  width: 13px;
  height: 13px;
  border: 1px solid #919191;
  border-radius: 1px;
  background: linear-gradient(#3a5ba0, #3a5ba0) center / 9px 1px no-repeat, linear-gradient(#fff, #dcdcdc);
}
.expand.plus {
  background:
    linear-gradient(#3a5ba0, #3a5ba0) center / 9px 1px no-repeat,
    linear-gradient(#3a5ba0, #3a5ba0) center / 1px 9px no-repeat,
    linear-gradient(#fff, #dcdcdc);
}

.map {
  flex: 1;
  display: grid;
  grid-template: minmax(0, 1fr) 26px / minmax(0, 1fr) 25px;
  min-width: 0;
  margin-left: 4px;
  border-top: 2px solid #707070;
  border-left: 1px solid #707070;
}
.roads {
  width: 100%;
  height: 100%;
  background: #fdfefe;
}
.roads path {
  fill: none;
  stroke: #dc9cfc;
  stroke-width: 1;
  stroke-dasharray: 9 1;
  shape-rendering: crispEdges;
}
.map-foot {
  grid-column: 1 / 3;
  display: flex;
  align-items: center;
  box-sizing: border-box;
  padding-right: 28px;
  background: #f0f0f0;
  border-top: 1px solid #ddd;
}
.view {
  box-sizing: border-box;
  display: flex;
  align-items: center;
  justify-content: center;
  width: 22px;
  height: 22px;
  margin: 0 3px;
}
.view.on {
  margin: 0 0 0 3px;
  border-color: #c2dcf2;
}
.view svg {
  width: 13px;
  height: 13px;
}
.map-foot .sep {
  margin: 0 3px 0 1px;
  background: #888;
}

.scroll {
  display: flex;
  flex: none;
  align-items: center;
  background: #f0f0f0;
}
.scroll.v {
  flex-direction: column;
}
.scroll button {
  flex: none;
}
.scroll.v button {
  width: 100%;
  height: 26px;
}
.scroll.v svg {
  width: 12px;
  height: 10px;
  margin: auto;
}
.scroll path {
  fill: none;
  stroke: #606060;
  stroke-width: 2.6;
}
.scroll.off path {
  stroke: #bfbfbf;
}
.scroll button:last-child {
  margin-top: auto;
}
.thumb {
  width: 24px;
  background: #cdcdcd;
}
.map-v .thumb {
  height: 194px;
  margin-top: 119px;
}
.map-v {
  border-left: 1px solid #ddd;
}
.scroll.h {
  flex: 1;
  height: 24px;
}
.scroll.h svg {
  width: 10px;
  height: 12px;
  margin: auto;
}
.scroll.h button {
  width: 24px;
}
.scroll.h button:last-child {
  margin: 0 0 0 auto;
}
.scroll.h .thumb {
  width: 330px;
  height: 22px;
  margin-left: 418px;
}

.tree-box {
  display: flex;
  flex: 1;
  min-height: 0;
  margin-right: 1px;
  border: 1px solid #828790;
  background: #fff;
}
.tree {
  flex: 1;
  padding-top: 1px;
  overflow: hidden;
}
.tree li {
  display: flex;
  align-items: center;
  height: 26px;
  white-space: nowrap;
}
.tree svg {
  width: 16px;
  height: 16px;
  margin: 0 3px 0 4px;
}
.tree span {
  padding: 0 2px;
}
.l0 {
  padding-left: 6px;
}
.l1 {
  padding-left: 25px;
}
.l2 {
  padding-left: 57px;
}
.picked {
  background: #f0f0f0;
}
.tree-v {
  width: 25px;
}
.tree-v .thumb {
  height: 254px;
  margin-top: 23px;
}
.tree-v button:first-child {
  height: 30px;
}
.dock-tabs {
  display: flex;
  height: 26px;
  padding-left: 2px;
}
.dock-tabs button {
  display: flex;
  align-items: center;
  gap: 4px;
  height: 26px;
  box-sizing: border-box;
  padding: 0 4px 1px;
  border: solid #999;
  border-width: 0 1px 1px 0;
  border-radius: 0 0 3px 3px;
  background: #f0f0f0;
  color: #777;
  white-space: nowrap;
}
.dock-tabs .active {
  border-left-width: 1px;
  background: #fff;
  color: #000;
}
.dock-tabs svg {
  width: 16px;
  height: 16px;
}

.status {
  display: flex;
  justify-content: flex-end;
  align-items: center;
  height: 30px;
  background: #f0f0f0;
}
.status i {
  width: 16px;
  height: 26px;
  border-right: 1px solid #f8f8f8;
}
.status p {
  display: flex;
  gap: 18px;
  width: 422px;
  white-space: nowrap;
  padding-top: 4px;
}

.taskbar {
  position: relative;
  display: flex;
  flex: none;
  height: 60px;
  background: #101010;
  color: #fff;
}
.taskbar button {
  display: flex;
  align-items: center;
  justify-content: center;
}
.sys {
  width: 72px;
}
.app {
  width: 75px;
  background: linear-gradient(#76b9ed, #76b9ed) center bottom / 61px 3px no-repeat;
}
.app.first {
  margin-left: 3px;
}
.app.active {
  background: linear-gradient(#76b9ed, #76b9ed) center bottom / 100% 3px no-repeat #333;
}
.tray {
  display: flex;
  align-items: center;
  margin-left: auto;
}
.ime {
  margin: 0 16px 0 13px;
  font-size: 24px;
}
.tray time {
  display: flex;
  flex-direction: column;
  align-items: center;
  width: 92px;
  padding-bottom: 2px;
  line-height: 28px;
}
.notice {
  margin: 0 30px;
}
.peek {
  align-self: stretch;
  width: 7px;
  border-left: 1px solid #555;
}
.watermark {
  position: absolute;
  right: 9px;
  bottom: 9px;
  font: 15px/22px 'Open Sans', sans-serif;
  color: rgba(200, 200, 200, 0.75);
}

.dialog {
  position: absolute;
  left: 325px;
  top: 139px;
  width: 971px;
  border: 1px solid #666;
  background: #f0f0f0;
  box-shadow: 0 5px 20px rgba(0, 0, 0, 0.4);
}
.dialog header {
  display: flex;
  align-items: center;
  box-sizing: border-box;
  height: 36px;
  padding: 0 16px 1px 3px;
  background: #fff;
}
.dialog header h2 {
  flex: 1;
}
.dialog header svg {
  width: 16px;
  height: 16px;
}
.tabs {
  display: flex;
  align-items: flex-end;
  height: 31px;
  padding: 12px 0 0 13px;
}
.tabs button {
  box-sizing: border-box;
  height: 29px;
  padding: 0 0 0 5px;
  border: solid #d9d9d9;
  border-width: 1px 1px 0 0;
  text-align: left;
  white-space: nowrap;
}
.tabs button:first-child {
  border-left-width: 1px;
}
.tabs .active {
  position: relative;
  height: 32px;
  margin-bottom: -1px;
  padding: 0 0 3px 7px;
  background: #fff;
}
.page {
  margin: 0 12px;
  padding: 11px 108px 117px 11px;
  border: 1px solid #dcdcdc;
  background: #fff;
  font-family: 'Open Sans', 'Noto Sans CJK SC', sans-serif;
  font-size: 16px;
}
.grid-box {
  display: flex;
  height: 264px;
  border: 1px solid #828790;
  overflow: hidden;
}
table {
  flex: 1;
  align-self: flex-start;
  border-collapse: separate;
  border-spacing: 0;
  table-layout: fixed;
  line-height: 22px;
}
th,
td {
  box-sizing: border-box;
  height: 23px;
  padding: 0 0 0 37px;
  border: solid #ececec;
  border-width: 0 1px 1px 0;
  font-weight: 400;
  text-align: left;
}
th {
  height: 26px;
  padding: 2px 0 0 6px;
  border-bottom: 0;
}
td:first-child,
th:first-child {
  width: 288px;
}
td + td,
th + th {
  padding-left: 6px;
}
.mini {
  display: inline-block;
  width: 7px;
  height: 7px;
  margin: 0 14px 1px -28px;
  border: 1px solid #888;
  background: linear-gradient(#000, #000) center / 5px 1px no-repeat;
}
.current td:first-child {
  background: linear-gradient(#f0f0f0, #f0f0f0) 35px 0 no-repeat;
}
.current td + td {
  padding: 0;
}
.current input {
  display: block;
  box-sizing: border-box;
  width: 100%;
  height: 23px;
  padding: 0 5px;
  border: 1px solid #666;
  background: #f0f0f0;
  line-height: 20px;
  outline: 0;
}
.current input::selection {
  background: #0078d7;
  color: #fff;
}
.grid-v {
  width: 25px;
  margin: 1px 1px 1px 3px;
}
.grid-v .thumb {
  height: 58px;
}
fieldset {
  min-width: 0;
  margin: 6px 0 0;
  padding: 5px 13px 9px 17px;
  border: 1px solid #dcdcdc;
}
legend {
  margin-left: -12px;
  padding: 0 2px;
  line-height: 22px;
}
.source {
  display: flex;
  height: 122px;
  border: 1px solid #7a7a7a;
}
.source dl {
  flex: 1;
  display: grid;
  grid-template-columns: 191px 1fr;
  grid-auto-rows: 19px;
  padding: 3px 5px;
  line-height: 19px;
}
.source .scroll {
  width: 25px;
  margin: 1px;
}
.source .scroll button {
  height: 30px;
}
.push {
  box-sizing: border-box;
  width: 136px;
  height: 40px;
  border: 1px solid #adadad;
  background: #e1e1e1;
}
.push.default {
  border: 2px solid #0078d7;
}
.push:disabled {
  border-color: #bfbfbf;
  background: #ccc;
  color: #838383;
}
.push.set {
  display: block;
  width: 237px;
  height: 32px;
  margin: 7px 2px 0 auto;
}
.dialog footer {
  display: flex;
  justify-content: flex-end;
  gap: 9px;
  padding: 20px 7px 7px;
}
</style>
